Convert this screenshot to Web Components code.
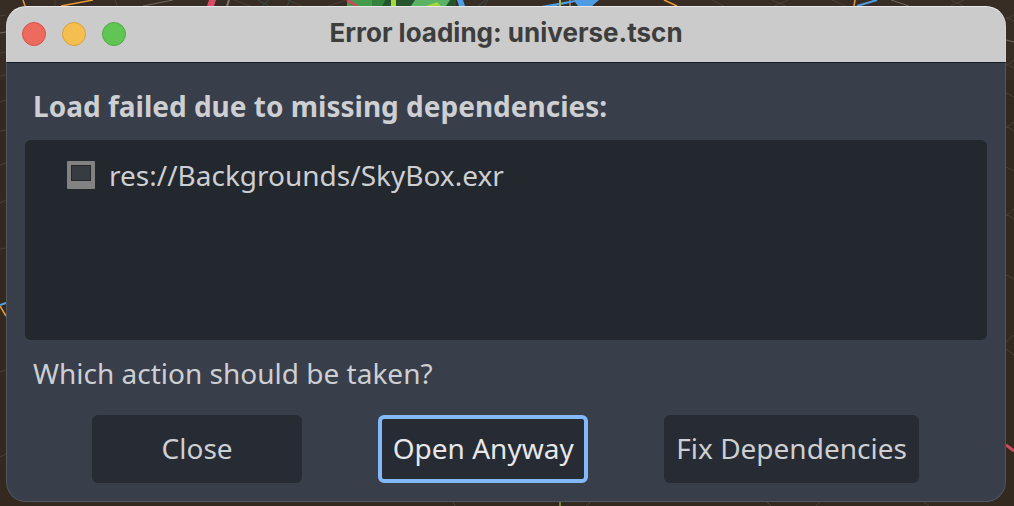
<!DOCTYPE html>
<html lang="en">
<head>
<meta charset="utf-8">
<title>Error loading: universe.tscn</title>
<style>
  html, body { height: 100%; }
  body { margin: 0; background: #33291f; font-family: "Noto Sans", sans-serif; overflow: hidden; }
</style>
</head>
<body>
<editor-stage>
  <dialog-window heading="Error loading: universe.tscn">
    <message-label strong>Load failed due to missing dependencies:</message-label>
    <dependency-list>
      <dependency-item>res://Backgrounds/SkyBox.exr</dependency-item>
    </dependency-list>
    <message-label>Which action should be taken?</message-label>
    <action-bar>
      <action-button>Close</action-button>
      <action-button focused>Open Anyway</action-button>
      <action-button>Fix Dependencies</action-button>
    </action-bar>
  </dialog-window>
</editor-stage>

<script>
const define = (name, html, setup) => {
  const template = document.createElement('template');
  template.innerHTML = html;
  customElements.define(name, class extends HTMLElement {
    constructor() {
      super();
      this.attachShadow({ mode: 'open' }).append(template.content.cloneNode(true));
    }
    connectedCallback() { if (setup) setup(this, this.shadowRoot); }
  });
};

define('editor-stage', `
  <style>
    :host { display: flex; position: relative; box-sizing: border-box; min-height: 100%; padding: 6px 8px 4px 6px; }
    svg { position: absolute; inset: 0; width: 100%; height: 100%; }
    slot { display: contents; }
  </style>
  <svg viewBox="0 0 1014 506" preserveAspectRatio="none" fill="none" aria-hidden="true">
    <path d="M0 0H1014V80H0Z" fill="#382d24"/>
    <g stroke="#4a4037">
      <path d="M0 16l6-1M0 53l6-1M0 76l6-1M0 102l6-2M0 131l6-1M0 165l6-2M0 203l6-3M0 249l6-1M0 372l6-2M0 457l6-3"/>
      <path d="M55 0v6M115 0l2 6M328 6l18-6M288 0l14 6M712 0l12 6M772 0l14 6M774 6l14-6M832 0l14 6M951 0l12 6M950 6l14-6M234 0l16 6"/>
      <path d="M1006 19l8-4M1006 17l8 4M1006 66l8-6M1006 64l8 4M1006 93l8 4M1006 128l8-6M1006 126l8 5M1006 167l8 4M1006 216l8-7M1006 214l8 5M1006 275l8 4M1006 342l8-7M1006 349l8 6"/>
      <path d="M453 502l2 4M586 506l5-4M767 502l4 4M816 506l4-4M924 502l5 4"/>
    </g>
    <path d="M258 0l11 6M262 6l7-6M287 6l3-6M478 6l8-6M488 0l-4 6" stroke="#344b4d"/>
    <path d="M143 6l30-6M0 33l6-1M891 0l18 6M1006 40l8 2" stroke="#706960"/>
    <path d="M227 6l2-6M570 6V0" stroke="#83796e" stroke-width="2"/>
    <path d="M23 0l2 6M61 6l32-6M664 0l13 6M854 6l1-6M0 306l6 10" stroke="#e69a36" stroke-width="1.5"/>
    <path d="M207 6l2-6h7l-2 6Z" fill="#d84c63"/>
    <path d="M347 0h109v6H347Z" fill="#25552d"/>
    <path d="M347 0h38l-3 6h-35Z" fill="#439a48"/>
    <path d="M372 0h13l-3 6h-10Z" fill="#34813b"/>
    <path d="M415 0h35l-4 6h-35Z" fill="#5bb365"/>
    <path d="M426 6l11-4 4 4Z" fill="#a1d63c"/>
    <path d="M391 0h5v6h-5Z" fill="#a8d934"/>
    <path d="M347 0l10 6M1006 445l8 6" stroke="#c94a5d" stroke-width="3"/>
    <path d="M457 0h6l2 6h-6ZM541 6l34-6h24l-7 6h-14l-3-4-19 4Z" fill="#4d9ce4"/>
    <path d="M560 6V0" stroke="#a5b842" stroke-width="2"/>
    <path d="M857 6l20-6M0 305l6-2" stroke="#4d9ce4" stroke-width="2"/>
    <path d="M560 502v4" stroke="#718426" stroke-width="2"/>
  </svg>
  <slot></slot>
`);

define('dialog-window', `
  <style>
    :host { display: flex; flex-direction: column; position: relative; flex: 1; border-radius: 20px;
            overflow: hidden; background: #383e4a; color: #cdcfd2; }
    :host::after { content: ""; position: absolute; inset: 0; border-radius: 20px;
            border: 1px solid #ffffff22; border-top-color: #ffffff90; pointer-events: none; }
    header { display: grid; grid-template-columns: 1fr auto 1fr; align-items: center; height: 56px;
            padding: 0 16px; background: #cbcbcb; border-bottom: 1px solid #151a25; }
    h1 { margin: 0; font: 700 26px/32px Inter, sans-serif; color: #3d3d3d; padding-bottom: 2px; }
    main { display: flex; flex-direction: column; flex: 1; padding: 23px 19px 19px; }
  </style>
  <header><traffic-lights></traffic-lights><h1></h1></header>
  <main><slot></slot></main>
`, (host, root) => { root.querySelector('h1').textContent = host.getAttribute('heading'); });

define('traffic-lights', `
  <style>
    :host { display: flex; gap: 16px; }
    button { width: 24px; height: 24px; padding: 0; border: 1px solid; border-radius: 50%; }
    .close { background: #ed6a5e; border-color: #d55348; }
    .minimize { background: #f5bf4f; border-color: #d8a13c; }
    .zoom { background: #61c554; border-color: #4fac40; }
  </style>
  <button class="close" aria-label="Close window"></button>
  <button class="minimize" aria-label="Minimize window"></button>
  <button class="zoom" aria-label="Zoom window"></button>
`);

define('message-label', `
  <style>
    :host { display: block; padding: 0 8px; font-size: 28px; line-height: 40px; }
    :host([strong]) { font-weight: 700; }
    p { margin: 0; }
  </style>
  <p><slot></slot></p>
`);

define('dependency-list', `
  <style>
    :host { display: block; flex: 1; box-sizing: border-box; min-height: 200px; margin: 14px 0 13px; padding: 15px 42px;
            border-radius: 6px; background: #23272e; }
  </style>
  <div role="list"><slot></slot></div>
`);

define('dependency-item', `
  <style>
    :host { display: flex; align-items: center; gap: 14px; font-size: 28px; line-height: 40px; }
    svg { display: block; flex: none; }
  </style>
  <svg width="28" height="28" viewBox="0 0 28 28" aria-hidden="true">
    <rect width="28" height="28" rx="1" fill="#828282"/>
    <rect x="4" y="4" width="20" height="16" fill="#23272e"/>
    <rect x="5" y="5" width="18" height="14" fill="#383b40"/>
  </svg>
  <span><slot></slot></span>
`);

define('action-bar', `
  <style>
    :host { display: flex; justify-content: space-evenly; margin: 22px -8px 0 -9px; }
  </style>
  <slot></slot>
`);

define('action-button', `
  <style>
    :host { display: block; }
    button { display: block; min-width: 210px; height: 68px; padding: 0 8px 2px; border: 4px solid #272b33;
            border-radius: 6px; background: #272b33; color: #cdcfd2; font: 400 28px/40px "Noto Sans", sans-serif; }
    :host([focused]) button { border-color: #83b8fb; color: #e6e7e9; }
  </style>
  <button type="button"><slot></slot></button>
`);
</script>
</body>
</html>
